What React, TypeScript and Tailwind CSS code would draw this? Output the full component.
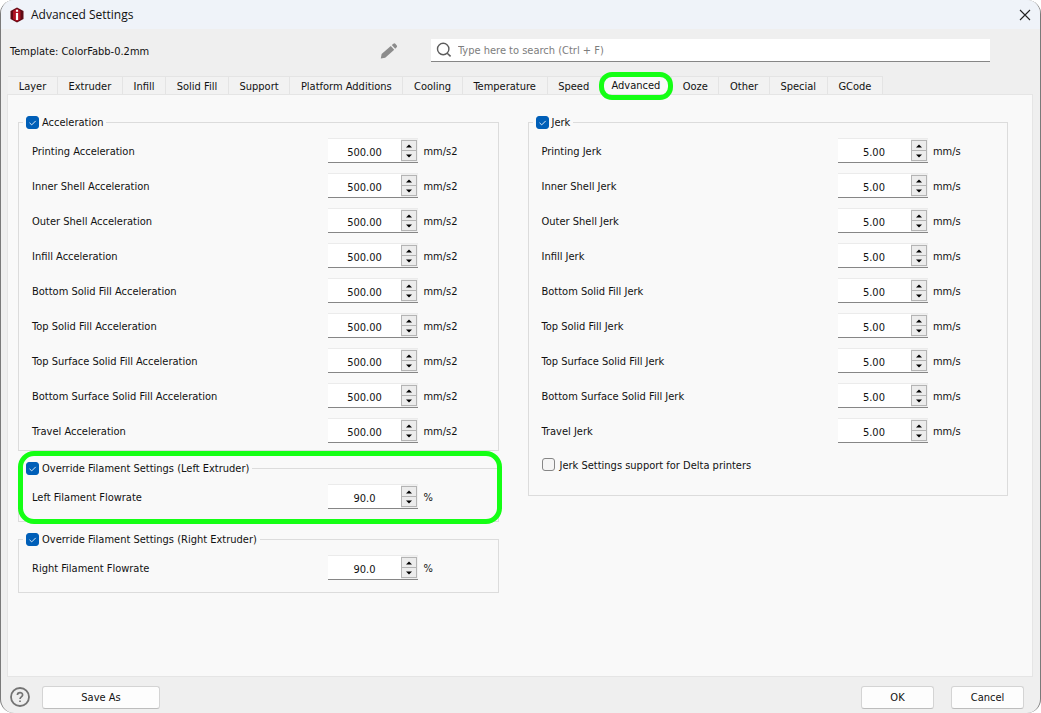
import { useId, useState } from "react";

type Row = { label: string; value: string; unit: string };

const tabs = [
  "Layer", "Extruder", "Infill", "Solid Fill", "Support", "Platform Additions", "Cooling",
  "Temperature", "Speed", "Advanced", "Ooze", "Other", "Special", "GCode",
];

const features = [
  "Printing", "Inner Shell", "Outer Shell", "Infill", "Bottom Solid Fill", "Top Solid Fill",
  "Top Surface Solid Fill", "Bottom Surface Solid Fill", "Travel",
];

const acceleration: Row[] = features.map((f) => ({ label: `${f} Acceleration`, value: "500.00", unit: "mm/s2" }));
const jerk: Row[] = features.map((f) => ({ label: `${f} Jerk`, value: "5.00", unit: "mm/s" }));

function CheckBox({ label, checked = false, className = "" }: { label: string; checked?: boolean; className?: string }) {
  return (
    <label className={`flex items-center whitespace-nowrap ${className}`}>
      <span className="grid size-[13px] shrink-0">
        <input
          type="checkbox"
          defaultChecked={checked}
          className="peer col-start-1 row-start-1 size-[13px] appearance-none rounded-[3px] border border-[#868686] bg-[#f5f5f5] checked:border-[#005fb8] checked:bg-[#005fb8]"
        />
        <svg viewBox="0 0 13 13" className="pointer-events-none col-start-1 row-start-1 hidden size-[13px] peer-checked:block">
          <path d="M3.5 6.8 5.7 8.9 9.7 4.9" fill="none" stroke="#dcebf8" strokeWidth="1" />
        </svg>
      </span>
      <span className="pt-0.5">{label}</span>
    </label>
  );
}

function SpinBox({ id, initial }: { id: string; initial: string }) {
  const [value, setValue] = useState(initial);
  const decimals = initial.split(".")[1].length;
  const step = (d: number) => setValue((v) => (Math.max(0, Number(v) + d) || 0).toFixed(decimals));
  const button = "flex flex-1 items-center justify-center border border-[#b4b4b4] bg-[#ececec]";
  return (
    <div className="flex h-[25px] border-t border-b border-t-[#ebebeb] border-b-[#868686] bg-[#f0f0f0]">
      <input
        id={id}
        value={value}
        onChange={(e) => setValue(e.target.value)}
        className="w-full min-w-0 flex-1 bg-white pt-1 pr-px text-center outline-none"
      />
      <div className="flex w-4 flex-col pt-px pb-px">
        <button type="button" aria-label="Increase" className={button} onClick={() => step(1)}>
          <svg viewBox="0 0 6 4" className="h-1 w-1.5"><path d="M0 3.5 3 0.5 6 3.5Z" /></svg>
        </button>
        <button type="button" aria-label="Decrease" className={`${button} border-t-0`} onClick={() => step(-1)}>
          <svg viewBox="0 0 6 4" className="h-1 w-1.5"><path d="M0 0.5 3 3.5 6 0.5Z" /></svg>
        </button>
      </div>
      <div className="w-px" />
    </div>
  );
}

function Field({ label, value, unit }: Row) {
  const id = useId();
  return (
    <div className="grid h-[35px] grid-cols-[15fr_90px_4fr] items-center pl-[13px]">
      <label htmlFor={id} className="pt-0.5 whitespace-nowrap">{label}</label>
      <SpinBox id={id} initial={value} />
      <span className="pt-0.5 pl-[5px]">{unit}</span>
    </div>
  );
}

function Group({ title, rows, className = "", children }: { title: string; rows: Row[]; className?: string; children?: React.ReactNode }) {
  return (
    <fieldset className={`min-w-0 border border-[#dcdcdc] ${className}`}>
      <legend className="ml-1 h-5 px-[3px]">
        <CheckBox label={title} checked className="h-5 gap-[3px]" />
      </legend>
      <div className="pt-px">
        {rows.map((r) => <Field key={r.label} {...r} />)}
      </div>
      {children}
    </fieldset>
  );
}

export default function App() {
  const [active, setActive] = useState("Advanced");
  const push = "h-[23px] rounded-[3px] border border-[#d4d4d4] border-b-[#bdbdbd] bg-[#fdfdfd] pt-0.5";
  return (
    <div className="flex min-h-screen flex-col overflow-hidden rounded-[14px] border-x border-[#7a7a7a] bg-[#efefef] font-['DejaVu_Sans_Condensed','DejaVu_Sans',sans-serif] text-[11px] leading-4 text-[#111]">
      <header className="flex h-[29px] items-center bg-[#eff3f9] pr-[7px] pl-2">
        <svg viewBox="0 0 16 16" className="size-4">
          <path d="M8 0.5 14.5 4V12L8 15.5 1.5 12V4Z" fill="#5f0a14" />
          <path d="M8 1.5 11.5 4V12L8 14.5 4 12V4Z" fill="#b01425" />
          <path d="M6.9 2.8h2.2v2H6.9ZM6.9 6h2.2v7H6.9Z" fill="#fff" />
        </svg>
        <h1 className="flex-1 pl-1.5 font-['Open_Sans',sans-serif] text-[12px]">Advanced Settings</h1>
        <button type="button" aria-label="Close" className="grid size-4 place-items-center">
          <svg viewBox="0 0 12 12" className="size-3"><path d="M1 1 11 11M11 1 1 11" stroke="#222" strokeWidth="1.1" fill="none" /></svg>
        </button>
      </header>

      <div className="flex h-[47px] items-start pt-2.5 pr-[50px] pl-[9px]">
        <div className="flex h-[23px] basis-[421px] items-center justify-between pr-[33px]">
          <span className="pt-0.5">Template: ColorFabb-0.2mm</span>
          <button type="button" aria-label="Edit template">
            <svg viewBox="0 0 18 18" className="size-[18px]" fill="#8c8c8c">
              <path d="M0.8 16.4 1.6 11.9 10.8 3.9 14.2 7.7 5.2 15.8Z" />
              <path d="M11.8 3 13.4 1.7Q14.4.9 15.3 1.8L16.8 3.5Q17.5 4.5 16.7 5.3L15.2 6.8Z" />
            </svg>
          </button>
        </div>
        <label className="flex h-[23px] flex-1 items-center border-b border-[#868686] bg-white pl-[5px]">
          <svg viewBox="0 0 16 16" className="size-4 shrink-0">
            <circle cx="7.2" cy="7" r="5.7" fill="none" stroke="#5c5c5c" strokeWidth="1.4" />
            <path d="M11.2 11.2 14.6 14.4" stroke="#5c5c5c" strokeWidth="1.5" />
          </svg>
          <input aria-label="Search" placeholder="Type here to search (Ctrl + F)" className="min-w-0 flex-1 pt-0.5 pl-1.5 outline-none placeholder:text-[#7d7d7d]" />
        </label>
      </div>

      <div role="tablist" className="flex h-[18px] max-w-[882px] pl-[7px]">
        {tabs.map((t) => (
          <button
            key={t}
            type="button"
            role="tab"
            aria-selected={t === active}
            onClick={() => setActive(t)}
            className={`relative grow border-t border-r border-[#e4e4e4] px-2.5 whitespace-nowrap ${t === active ? "bg-[#f9f9f9]" : "bg-[#f2f2f2] pt-0.5"}`}
          >
            {t}
            {t === "Advanced" && (
              <span className="pointer-events-none absolute -inset-x-0.5 -top-[5px] -bottom-[6px] z-10 rounded-[13px] border-[5px] border-[#14ff14]" />
            )}
          </button>
        ))}
      </div>

      <main className="mr-[7px] ml-1.5 grid flex-1 grid-cols-2 items-start gap-[29px] border border-[#e5e5e5] bg-[#f9f9f9] pt-[17px] pr-6 pl-2.5">
        <div className="flex flex-col gap-[7px]">
          <Group title="Acceleration" rows={acceleration} className="pb-0.5" />
          <div className="relative">
            <Group
              title="Override Filament Settings (Left Extruder)"
              rows={[{ label: "Left Filament Flowrate", value: "90.0", unit: "%" }]}
              className="pb-[7px]"
            />
            <div className="pointer-events-none absolute -top-[7px] -right-[3px] -bottom-0.5 left-0 rounded-[16px] border-[5px] border-[#14ff14]" />
          </div>
          <Group
            title="Override Filament Settings (Right Extruder)"
            rows={[{ label: "Right Filament Flowrate", value: "90.0", unit: "%" }]}
            className="pb-[7px]"
          />
        </div>
        <Group title="Jerk" rows={jerk}>
          <CheckBox label="Jerk Settings support for Delta printers" className="mb-3.5 h-[33px] gap-[5px] pl-[13px]" />
        </Group>
      </main>

      <footer className="flex h-9 items-center pt-1 pr-4 pl-[9px]">
        <button type="button" aria-label="Help">
          <svg viewBox="0 0 20 20" className="size-5" fill="none" stroke="#747474">
            <circle cx="10" cy="10" r="9" strokeWidth="1.8" />
            <path d="M7.4 8.1C7.4 4.7 12.6 4.8 12.6 7.9 12.6 9.8 10 9.9 10 12" strokeWidth="1.7" />
            <path d="M10 13.4V15" strokeWidth="1.7" />
          </svg>
        </button>
        <button type="button" className={`${push} ml-3 w-[118px]`}>Save As</button>
        <div className="flex-1" />
        <button type="button" className={`${push} w-[73px]`}>OK</button>
        <button type="button" className={`${push} ml-[17px] w-[73px]`}>Cancel</button>
      </footer>
    </div>
  );
}
